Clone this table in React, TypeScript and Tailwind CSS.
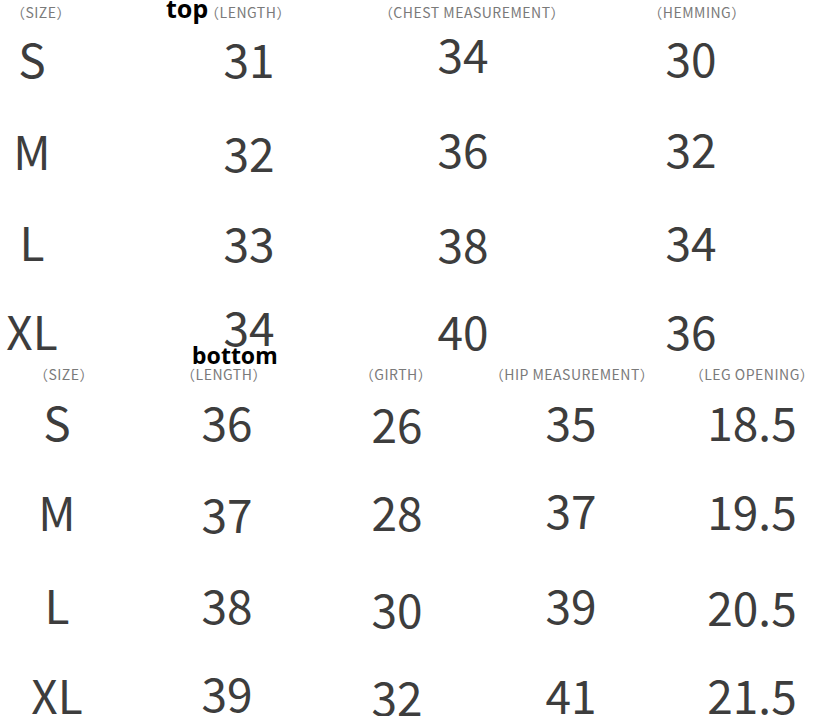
const cjk = "font-['Noto_Sans_CJK_SC','Noto_Sans',sans-serif]";

type Cell = { text: string; cls: string };

// each cell is 200px wide and centred; margins put the centres where the chart has them
const topHead: Cell[] = [
  { text: "（SIZE）", cls: "-ml-[59px] mt-[5px]" },
];

const topRows: Cell[][] = [
  [
    { text: "S", cls: "-ml-[68px] mt-[11px]" },
    { text: "31", cls: "ml-[17px] mt-[11px]" },
    { text: "34", cls: "ml-[14px] mt-[6px]" },
    { text: "30", cls: "ml-[28px] mt-[10px]" },
  ],
  [
    { text: "M", cls: "-ml-[68px] mt-[12px]" },
    { text: "32", cls: "ml-[17px] mt-[14px]" },
    { text: "36", cls: "ml-[14px] mt-[10px]" },
    { text: "32", cls: "ml-[28px] mt-[10px]" },
  ],
  [
    { text: "L", cls: "-ml-[68px] mt-[12px]" },
    { text: "33", cls: "ml-[17px] mt-[13px]" },
    { text: "38", cls: "ml-[14px] mt-[14px]" },
    { text: "34", cls: "ml-[28px] mt-[12px]" },
  ],
  [
    { text: "XL", cls: "-ml-[68px] mt-[10px]" },
    { text: "34", cls: "ml-[17px] mt-[6px]" },
    { text: "40", cls: "ml-[14px] mt-[10px]" },
    { text: "36", cls: "ml-[28px] mt-[10px]" },
  ],
];

const bottomHead: Cell[] = [
  { text: "（SIZE）", cls: "-ml-[36px]" },
  { text: "（LENGTH）", cls: "-ml-[40px]" },
  { text: "（GIRTH）", cls: "-ml-[28px]" },
  { text: "（HIP MEASUREMENT）", cls: "-ml-[24px]" },
  { text: "（LEG OPENING）", cls: "-ml-[20px]" },
];

const bottomRows: Cell[][] = [
  [
    { text: "S", cls: "-ml-[43px] mt-[8px]" },
    { text: "36", cls: "-ml-[30px] mt-[8px]" },
    { text: "26", cls: "-ml-[30px] mt-[10px]" },
    { text: "35", cls: "-ml-[26px] mt-[8px]" },
    { text: "18.5", cls: "-ml-[19px] mt-[8px]" },
  ],
  [
    { text: "M", cls: "-ml-[43px] mt-[7px]" },
    { text: "37", cls: "-ml-[30px] mt-[9px]" },
    { text: "28", cls: "-ml-[30px] mt-[7px]" },
    { text: "37", cls: "-ml-[26px] mt-[5px]" },
    { text: "19.5", cls: "-ml-[19px] mt-[6px]" },
  ],
  [
    { text: "L", cls: "-ml-[43px] mt-[9px]" },
    { text: "38", cls: "-ml-[30px] mt-[9px]" },
    { text: "30", cls: "-ml-[30px] mt-[13px]" },
    { text: "39", cls: "-ml-[26px] mt-[9px]" },
    { text: "20.5", cls: "-ml-[19px] mt-[11px]" },
  ],
  [
    { text: "XL", cls: "-ml-[43px] mt-[8px]" },
    { text: "39", cls: "-ml-[30px] mt-[6px]" },
    { text: "32", cls: "-ml-[30px] mt-[10px]" },
    { text: "41", cls: "-ml-[26px] mt-[8px]" },
    { text: "21.5", cls: "-ml-[19px] mt-[8px]" },
  ],
];

function HeadCell({ cell }: { cell: Cell }) {
  return (
    <div
      className={`flex w-[200px] shrink-0 justify-center whitespace-nowrap text-[14px] leading-none tracking-[0.5px] text-[#7a7a7a] ${cell.cls}`}
    >
      {cell.text}
    </div>
  );
}

function ValueCell({ cell }: { cell: Cell }) {
  return (
    <div
      className={`flex w-[200px] shrink-0 justify-center whitespace-nowrap text-[46px] leading-none text-[#3d3d3d] ${cell.cls}`}
    >
      {cell.text}
    </div>
  );
}

function Label({ text, cls }: { text: string; cls: string }) {
  return (
    <div
      className={`shrink-0 whitespace-nowrap font-['Noto_Sans',sans-serif] font-bold leading-none text-black ${cls}`}
    >
      {text}
    </div>
  );
}

export default function App() {
  return (
    <div className={`flex h-[716px] w-[822px] flex-col overflow-hidden bg-white ${cjk}`}>
      {/* top table */}
      <div className="flex h-[24px] shrink-0 items-start">
        {topHead.map((c) => (
          <HeadCell key={c.text} cell={c} />
        ))}
        <Label text="top" cls="ml-[25px] -mt-[4px] w-[48px] text-[25px]" />
        <HeadCell cell={{ text: "（LENGTH）", cls: "-ml-[66px] mt-[5px]" }} />
        <HeadCell cell={{ text: "（CHEST MEASUREMENT）", cls: "ml-[24px] mt-[5px]" }} />
        <HeadCell cell={{ text: "（HEMMING）", cls: "ml-[25px] mt-[5px]" }} />
      </div>
      {topRows.map((row, i) => (
        <div key={i} className={`flex shrink-0 items-start ${i === 3 ? "h-[48px]" : "h-[91px]"}`}>
          {row.map((c, j) => (
            <ValueCell key={j} cell={c} />
          ))}
        </div>
      ))}

      {/* bottom table */}
      <div className="flex h-[22px] shrink-0 items-start">
        <Label text="bottom" cls="ml-[192px] -mt-[1px] text-[23px]" />
      </div>
      <div className="flex h-[23px] shrink-0 items-start">
        {bottomHead.map((c) => (
          <HeadCell key={c.text} cell={c} />
        ))}
      </div>
      {bottomRows.map((row, i) => (
        <div key={i} className="flex h-[91px] shrink-0 items-start">
          {row.map((c, j) => (
            <ValueCell key={j} cell={c} />
          ))}
        </div>
      ))}
    </div>
  );
}
